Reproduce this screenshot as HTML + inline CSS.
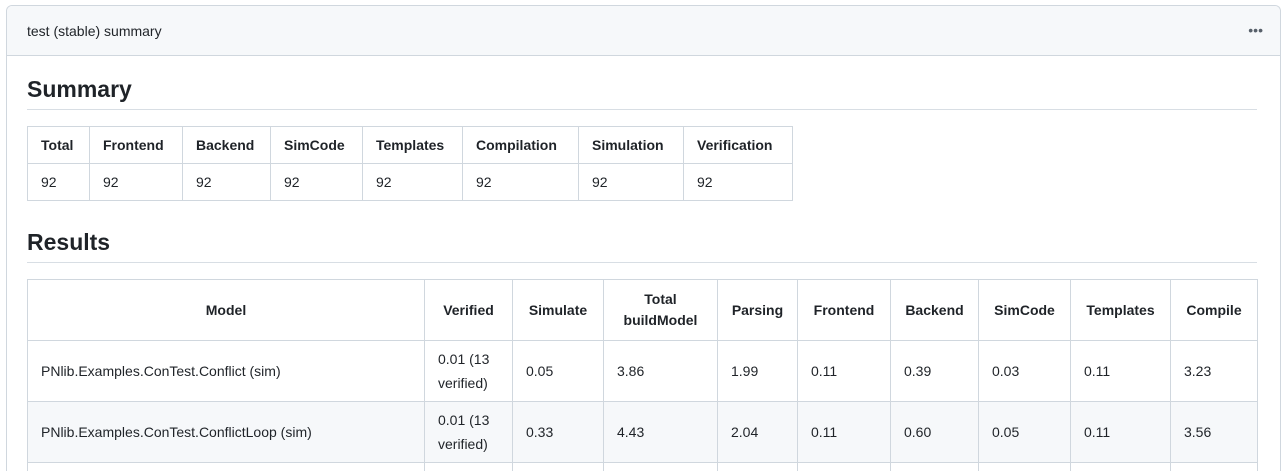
<!DOCTYPE html>
<html><head><style>
html,body{margin:0;width:1287px;height:471px;overflow:hidden}
body{background:#fff;font-family:"Liberation Sans",sans-serif;color:#1f2328;font-size:14px;position:relative}
.box{position:absolute;left:6px;top:5px;width:1273px;height:466px;border:1px solid #d0d7de;border-bottom:none;border-radius:6px 6px 0 0;overflow:hidden}
.hd{height:49px;background:#f6f8fa;border-bottom:1px solid #d0d7de;line-height:50px;padding-left:20px;font-size:14px}
.dots{position:absolute;right:17px;top:0;line-height:48px;font-size:14px;color:#57606a}
h2{position:absolute;left:20px;width:1230px;margin:0;font-size:23px;font-weight:bold;border-bottom:1px solid #d8dee4;padding-bottom:6px;height:28px;line-height:28px}
table{position:absolute;left:20px;border-collapse:collapse;table-layout:fixed}
td,th{border:1px solid #d0d7de;padding:0 13px;text-align:left}
th{font-weight:bold}
.t1 td,.t1 th{height:36px}
.t2 th{height:60px;text-align:center;line-height:21px}
.t2 td{height:60px;line-height:24px}
.t2 tr.g td{background:#f6f8fa}
</style></head><body>
<div class="box">
<div class="hd">test (stable) summary<span class="dots">•••</span></div>
<h2 style="top:69px">Summary</h2>
<table class="t1" style="top:120px">
<colgroup><col style="width:62px"><col style="width:93px"><col style="width:88px"><col style="width:92px"><col style="width:100px"><col style="width:116px"><col style="width:105px"><col style="width:109px"></colgroup>
<tr><th>Total</th><th>Frontend</th><th>Backend</th><th>SimCode</th><th>Templates</th><th>Compilation</th><th>Simulation</th><th>Verification</th></tr>
<tr><td>92</td><td>92</td><td>92</td><td>92</td><td>92</td><td>92</td><td>92</td><td>92</td></tr>
</table>
<h2 style="top:222px">Results</h2>
<table class="t2" style="top:273px">
<colgroup><col style="width:397px"><col style="width:88px"><col style="width:91px"><col style="width:114px"><col style="width:80px"><col style="width:93px"><col style="width:88px"><col style="width:92px"><col style="width:100px"><col style="width:87px"></colgroup>
<tr><th>Model</th><th>Verified</th><th>Simulate</th><th>Total buildModel</th><th>Parsing</th><th>Frontend</th><th>Backend</th><th>SimCode</th><th>Templates</th><th>Compile</th></tr>
<tr><td>PNlib.Examples.ConTest.Conflict (sim)</td><td>0.01 (13 verified)</td><td>0.05</td><td>3.86</td><td>1.99</td><td>0.11</td><td>0.39</td><td>0.03</td><td>0.11</td><td>3.23</td></tr>
<tr class="g"><td>PNlib.Examples.ConTest.ConflictLoop (sim)</td><td>0.01 (13 verified)</td><td>0.33</td><td>4.43</td><td>2.04</td><td>0.11</td><td>0.60</td><td>0.05</td><td>0.11</td><td>3.56</td></tr>
<tr><td>&nbsp;</td><td></td><td></td><td></td><td></td><td></td><td></td><td></td><td></td><td></td></tr>
</table>
</div>
</body></html>
